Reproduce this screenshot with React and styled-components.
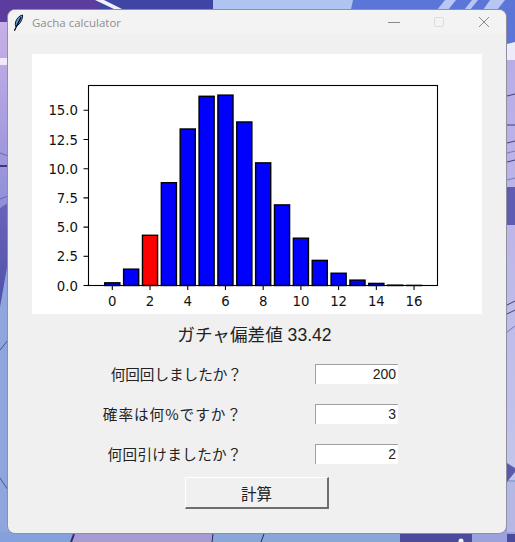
import React from 'react';
import styled, { createGlobalStyle } from 'styled-components';

const GlobalStyle = createGlobalStyle`
  html, body {
    margin: 0;
    padding: 0;
    overflow: hidden;
  }
`;

const LATIN_FIRST = '"Liberation Sans", "Noto Sans CJK JP", sans-serif';
const CJK_FIRST = '"Noto Sans CJK JP", "Liberation Sans", sans-serif';

// percent per hit count, the last ones are next to nothing
const BARS = [0.23, 1.4, 4.3, 8.8, 13.4, 16.2, 16.3, 14.0, 10.5, 6.9, 4.05, 2.15, 1.05, 0.46, 0.18, 0.03, 0.01];
const HIT_INDEX = 2;
const X_ORIGIN = 112.3;
const X_STEP = 18.86;
const Y_ZERO = 285.5;
const Y_UNIT = 11.68;

const X_TICKS = [0, 2, 4, 6, 8, 10, 12, 14, 16];
const Y_TICKS = ['0.0', '2.5', '5.0', '7.5', '10.0', '12.5', '15.0'];

const FIELDS = [
  { label: '何回回しましたか？', value: '200', tracking: 0 },
  { label: '確率は何%ですか？', value: '3', tracking: 1 },
  { label: '何回引けましたか？', value: '2', tracking: 0.35 },
];

const Desktop = styled.div`
  position: relative;
  box-sizing: border-box;
  width: 515px;
  height: 542px;
  padding: 9px 8px 8px 7px;
  overflow: hidden;
  background: #8fa5de;
`;

const Wallpaper = styled.svg`
  position: absolute;
  inset: 0;
`;

const Window = styled.div`
  position: relative;
  box-sizing: border-box;
  width: 500px;
  height: 525px;
  display: flex;
  flex-direction: column;
  border: 1px solid #8f8f9f;
  border-radius: 8px;
  background: #f0f0f0;
  overflow: hidden;
`;

const TitleBar = styled.div`
  display: flex;
  align-items: center;
  height: 24px;
  flex: none;
  background: #f3f3f3;
`;

const AppIcon = styled.svg`
  width: 12px;
  height: 18px;
  margin-left: 4px;
  margin-top: 1px;
  flex: none;
`;

const Title = styled.span`
  margin-left: 8px;
  font: 11.5px "Open Sans", sans-serif;
  color: #8f8f8f;
`;

const WindowControls = styled.div`
  display: flex;
  align-items: center;
  margin-left: auto;
  margin-right: 16px;
  gap: 33px;
`;

const ControlIcon = styled.svg`
  width: 12px;
  height: 12px;
  display: block;
`;

const Content = styled.div`
  display: flex;
  flex-direction: column;
  align-items: center;
  padding-top: 20px;
`;

const ChartFrame = styled.svg`
  width: 450px;
  height: 260px;
  display: block;
  background: #fff;
`;

const Score = styled.div`
  margin-top: 9px;
  padding-right: 5px;
  height: 24px;
  line-height: 24px;
  font-family: ${LATIN_FIRST};
  font-size: 17.6px;
  color: #222;
  white-space: nowrap;
`;

const Form = styled.div`
  width: 100%;
  display: flex;
  flex-direction: column;
  gap: 20px;
  margin-top: 16px;
`;

const FieldRow = styled.div`
  display: grid;
  grid-template-columns: 234px 83px;
  column-gap: 73px;
  align-items: center;
  height: 20px;
`;

const FieldLabel = styled.label`
  text-align: right;
  font-family: ${CJK_FIRST};
  font-size: 14.6px;
  letter-spacing: ${(p) => p.$tracking}px;
  color: #222;
  white-space: nowrap;
`;

const FieldInput = styled.input`
  box-sizing: border-box;
  width: 83px;
  height: 20px;
  padding: 0 2px 0 0;
  border: 0;
  border-top: 1px solid #a0a0a0;
  border-left: 1px solid #a0a0a0;
  border-radius: 0;
  outline: none;
  background: #fff;
  text-align: right;
  font-family: "Liberation Sans", sans-serif;
  font-size: 14px;
  color: #222;
`;

const CalcButton = styled.button`
  box-sizing: border-box;
  width: 144px;
  height: 32px;
  margin-top: 14px;
  padding: 0;
  border: 0;
  border-top: 1px solid #fff;
  border-left: 1px solid #fff;
  border-right: 2px solid #6e6e6e;
  border-bottom: 2px solid #6e6e6e;
  background: #f0f0f0;
  font-family: ${CJK_FIRST};
  font-size: 15.5px;
  color: #222;
`;

const TickLabel = styled.text`
  font-family: "DejaVu Sans", sans-serif;
  font-size: 13.3px;
  fill: #111;
`;

const BarChart = () => (
  <ChartFrame viewBox="32 54 450 260" aria-label="histogram">
    {BARS.map((v, i) => {
      const h = v * Y_UNIT;
      return (
        <rect
          key={i}
          x={X_ORIGIN + X_STEP * i - 7.55}
          y={Y_ZERO - h}
          width={15.1}
          height={h}
          fill={i === HIT_INDEX ? '#ff0000' : '#0000ff'}
          stroke="#000"
          strokeWidth="1.4"
        />
      );
    })}
    <rect x="88.5" y="85.5" width="349" height="200" fill="none" stroke="#000" strokeWidth="1.1" />
    {X_TICKS.map((t) => {
      const x = X_ORIGIN + X_STEP * t;
      return (
        <g key={t}>
          <line x1={x} x2={x} y1="285.5" y2="290" stroke="#000" strokeWidth="1.1" />
          <TickLabel x={x} y="306" textAnchor="middle">{t}</TickLabel>
        </g>
      );
    })}
    {Y_TICKS.map((t) => {
      const y = Y_ZERO - parseFloat(t) * Y_UNIT;
      return (
        <g key={t}>
          <line x1="83.5" x2="88.5" y1={y} y2={y} stroke="#000" strokeWidth="1.1" />
          <TickLabel x="78" y={y + 5} textAnchor="end">{t}</TickLabel>
        </g>
      );
    })}
  </ChartFrame>
);

const Backdrop = () => (
  <Wallpaper width="515" height="542" viewBox="0 0 515 542">
    <defs>
      <linearGradient id="leftLilac" x1="0" y1="0" x2="0" y2="1">
        <stop offset="0" stopColor="#c8b0e8" />
        <stop offset="1" stopColor="#8f8fd8" />
      </linearGradient>
      <linearGradient id="leftDark" x1="0" y1="0" x2="0" y2="1">
        <stop offset="0" stopColor="#6a63bc" />
        <stop offset="1" stopColor="#4f52a8" />
      </linearGradient>
      <linearGradient id="rightLilac" x1="0" y1="0" x2="0" y2="1">
        <stop offset="0" stopColor="#b8ace6" />
        <stop offset="1" stopColor="#c2c6ec" />
      </linearGradient>
    </defs>
    {/* top edge */}
    <rect x="0" y="0" width="100" height="30" fill="#5c3c9c" />
    <rect x="100" y="0" width="113" height="30" fill="#3f45a2" />
    <polygon points="95,0 104,0 124,10 116,10" fill="#f2f0fa" />
    <rect x="213" y="0" width="140" height="30" fill="#afc4f1" />
    <polygon points="353,0 515,0 515,60 340,60" fill="#5b75d9" />
    <polygon points="445,0 456,0 448,10 437,10" fill="#b7c6f2" />
    <polygon points="472,0 478,0 470,10 464,10" fill="#b7c6f2" />
    <polygon points="490,0 505,0 497,10 483,10" fill="#b7c6f2" />
    {/* left edge */}
    <rect x="0" y="22" width="8" height="185" fill="url(#leftLilac)" />
    <rect x="0" y="58" width="8" height="7" fill="#f0eafa" />
    <line x1="0" y1="153" x2="8" y2="156" stroke="#6d62b0" />
    <rect x="0" y="165" width="8" height="2" fill="#3f3488" />
    <line x1="0" y1="199" x2="8" y2="196" stroke="#6d62b0" />
    <polygon points="0,208 8,203 8,262 0,307" fill="url(#leftDark)" />
    <line x1="0" y1="350" x2="8" y2="340" stroke="#4a5196" />
    <line x1="0" y1="478" x2="8" y2="490" stroke="#4a5196" />
    {/* right edge */}
    <rect x="507" y="60" width="8" height="420" fill="url(#rightLilac)" />
    <polygon points="507,44 515,42 515,60 507,60" fill="#ecebf9" />
    <rect x="507" y="187" width="8" height="38" fill="#5f5cb4" />
    <line x1="507" y1="96" x2="515" y2="94" stroke="#3f3f80" />
    <line x1="507" y1="125" x2="515" y2="125" stroke="#3f3f80" />
    <line x1="507" y1="143" x2="515" y2="141" stroke="#3f3f80" />
    <line x1="507" y1="153" x2="515" y2="151" stroke="#7a78b8" />
    <line x1="507" y1="162" x2="515" y2="160" stroke="#3f3f80" />
    <line x1="507" y1="180" x2="515" y2="178" stroke="#7a78b8" />
    <line x1="507" y1="305" x2="515" y2="301" stroke="#3f3f80" />
    <line x1="507" y1="314" x2="515" y2="310" stroke="#3f3f80" />
    <line x1="507" y1="332" x2="515" y2="326" stroke="#7a78b8" />
    <polygon points="507,463 515,468 515,472 507,482" fill="#5a59ac" />
    <rect x="507" y="482" width="8" height="60" fill="#b5b7e4" />
    {/* bottom edge */}
    <rect x="0" y="532" width="72" height="10" fill="#85a1dd" />
    <rect x="72" y="532" width="140" height="10" fill="#a69bd2" />
    <rect x="212" y="532" width="188" height="10" fill="#8aa6d9" />
    <rect x="400" y="532" width="72" height="10" fill="#4c4a9d" />
    <rect x="472" y="532" width="43" height="10" fill="#9aa1dd" />
    <line x1="74" y1="534" x2="71" y2="542" stroke="#2f2a6a" strokeWidth="2" />
    <line x1="213" y1="534" x2="212" y2="542" stroke="#2a2458" />
    <line x1="264" y1="534" x2="261" y2="542" stroke="#2a2458" />
    <circle cx="461" cy="541" r="2.5" fill="#f2f2fa" />
    <rect x="507" y="534" width="8" height="8" fill="#4c4a9d" />
  </Wallpaper>
);

export default function App() {
  return (
    <>
      <GlobalStyle />
      <Desktop>
        <Backdrop />
        <Window>
          <TitleBar>
            <AppIcon viewBox="0 0 12 18">
              <path d="M10.5 1 C7.5 1.5 4.5 4.5 3.6 8 C3.2 9.8 3.2 11.2 3.6 12.4 C6.5 11.5 8.8 8.5 9.8 5.5 C10.4 3.8 10.8 2.2 10.5 1 Z" fill="#5b9be6" stroke="#10182a" strokeWidth="1" />
              <path d="M9 3.2 L2.4 16.8" stroke="#000" strokeWidth="1.2" fill="none" />
            </AppIcon>
            <Title>Gacha calculator</Title>
            <WindowControls>
              <ControlIcon viewBox="0 0 12 12">
                <line x1="0" x2="12" y1="6.5" y2="6.5" stroke="#8a8a8a" />
              </ControlIcon>
              <ControlIcon viewBox="0 0 12 12">
                <rect x="1.5" y="1.5" width="9" height="9" rx="1" fill="none" stroke="#dcdcdc" />
              </ControlIcon>
              <ControlIcon viewBox="0 0 12 12">
                <path d="M1 1 L11 11 M11 1 L1 11" stroke="#8a8a8a" fill="none" />
              </ControlIcon>
            </WindowControls>
          </TitleBar>
          <Content>
            <BarChart />
            <Score>ガチャ偏差値 33.42</Score>
            <Form>
              {FIELDS.map((f) => (
                <FieldRow key={f.label}>
                  <FieldLabel $tracking={f.tracking}>{f.label}</FieldLabel>
                  <FieldInput defaultValue={f.value} />
                </FieldRow>
              ))}
            </Form>
            <CalcButton>計算</CalcButton>
          </Content>
        </Window>
      </Desktop>
    </>
  );
}
